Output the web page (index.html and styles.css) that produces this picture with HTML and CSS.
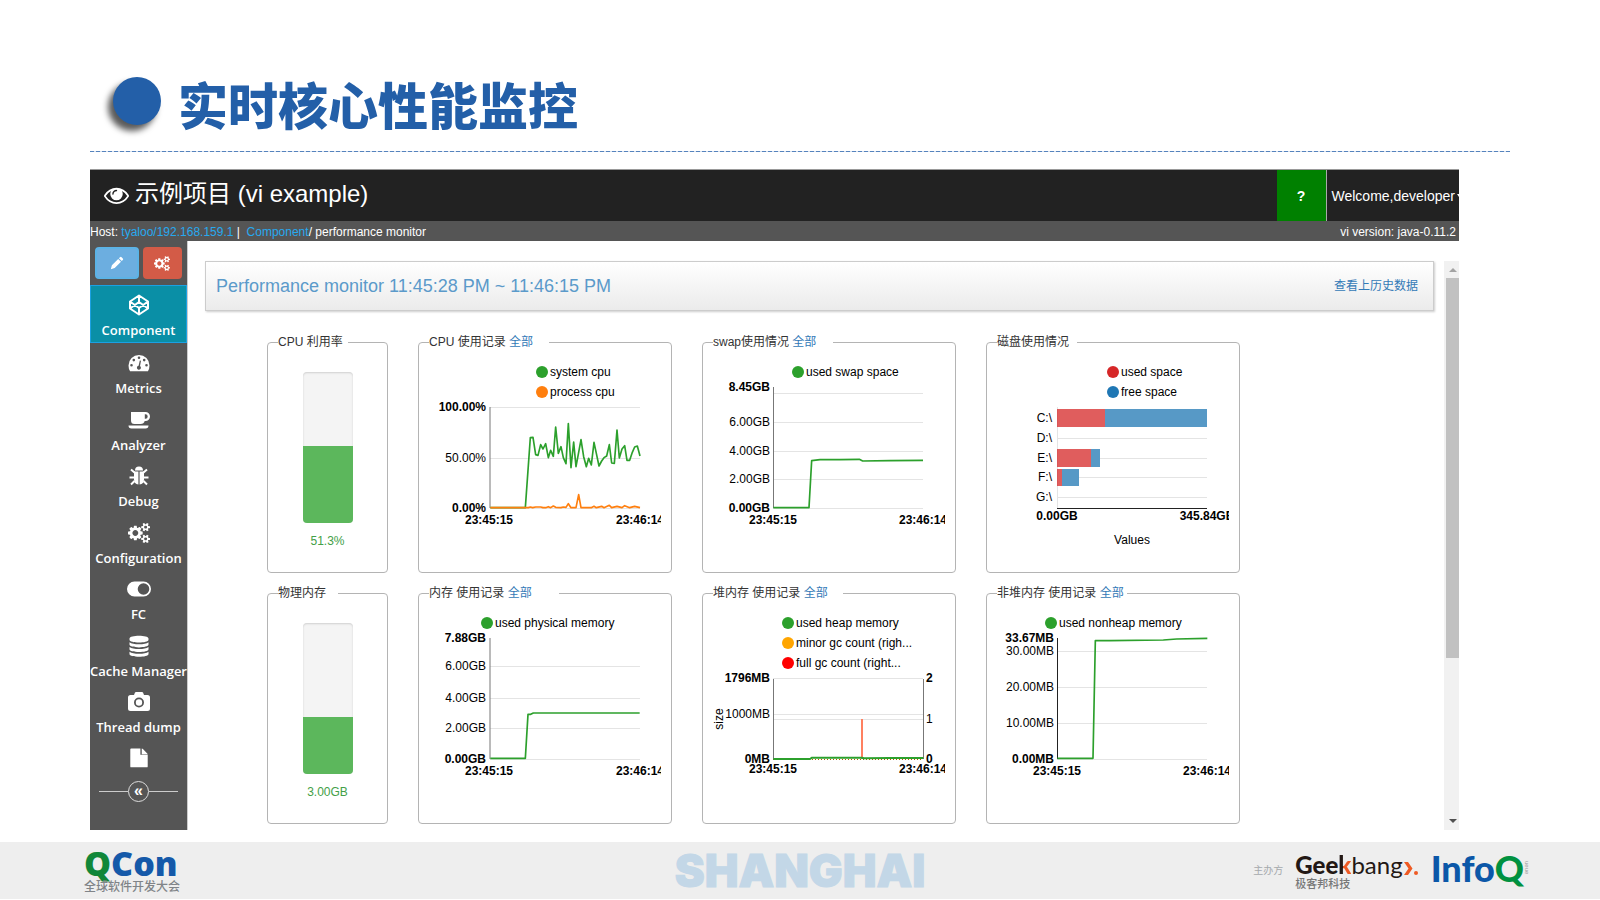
FILE: index.html
```html
<!DOCTYPE html>
<html lang="zh-CN">
<head>
<meta charset="utf-8">
<title>实时核心性能监控</title>
<link rel="stylesheet" href="styles.css">
</head>
<body>
<svg class="defs" width="0" height="0" aria-hidden="true">
  <symbol id="cogs" viewBox="0 0 1920 1792"><path d="M896 896q0-106-75-181t-181-75-181 75-75 181 75 181 181 75 181-75 75-181zm768 512q0-52-38-90t-90-38-90 38-38 90q0 53 37.500 90.500t90.500 37.500 90.500-37.500 37.500-90.500zm0-1024q0-52-38-90t-90-38-90 38-38 90q0 53 37.500 90.500t90.500 37.500 90.500-37.500 37.500-90.500zm-384 421v185q0 10-7 19.500t-16 10.500l-155 24q-11 35-32 76 34 48 90 115 7 11 7 20 0 12-7 19-23 30-82.500 89.500t-78.500 59.500q-11 0-21-7l-115-90q-37 19-77 31-11 108-23 155-7 24-30 24h-186q-11 0-20-7.500t-10-17.500l-23-153q-34-10-75-31l-118 89q-7 7-20 7-11 0-21-8-144-133-144-160 0-9 7-19 10-14 41-53t47-61q-23-44-35-82l-152-24q-10-1-17-9.500t-7-19.500v-185q0-10 7-19.500t16-10.500l155-24q11-35 32-76-34-48-90-115-7-11-7-20 0-12 7-20 22-30 82-89t79-59q11 0 21 7l115 90q34-18 77-32 11-108 23-154 7-24 30-24h186q11 0 20 7.500t10 17.500l23 153q34 10 75 31l118-89q8-7 20-7 11 0 21 8 144 133 144 160 0 8-7 19-12 16-42 54t-45 60q23 48 34 82l152 23q10 2 17 10.500t7 19.500zm640 533v140q0 16-149 31-12 27-30 52 51 113 51 138 0 4-4 7-122 71-124 71-8 0-46-47t-52-68q-20 2-30 2t-30-2q-14 21-52 68t-46 47q-2 0-124-71-4-3-4-7 0-25 51-138-18-25-30-52-149-15-149-31v-140q0-16 149-31 13-29 30-52-51-113-51-138 0-4 4-7 4-2 35-20t59-34 30-16q8 0 46 46.500t52 67.500q20-2 30-2t30 2q51-71 92-112l6-2q4 0 124 70 4 3 4 7 0 25-51 138 17 23 30 52 149 15 149 31zm0-1024v140q0 16-149 31-12 27-30 52 51 113 51 138 0 4-4 7-122 71-124 71-8 0-46-47t-52-68q-20 2-30 2t-30-2q-14 21-52 68t-46 47q-2 0-124-71-4-3-4-7 0-25 51-138-18-25-30-52-149-15-149-31v-140q0-16 149-31 13-29 30-52-51-113-51-138 0-4 4-7 4-2 35-20t59-34 30-16q8 0 46 46.500t52 67.500q20-2 30-2t30 2q51-71 92-112l6-2q4 0 124 70 4 3 4 7 0 25-51 138 17 23 30 52 149 15 149 31z"/></symbol>
</svg>

<header class="slide-head">
  <span class="bullet"></span>
  <h1>实时核心性能监控</h1>
</header>

<div class="app">
  <header class="navbar">
    <svg class="eye" viewBox="0 256 1792 1280"><path d="M1664 960q-152-236-381-353 61 104 61 225 0 185-131.500 316.500t-316.500 131.500-316.500-131.500-131.500-316.500q0-121 61-225-229 117-381 353 133 205 333.500 326.500t434.500 121.500 434.500-121.500 333.500-326.500zm-720-384q0-20-14-34t-34-14q-125 0-214.500 89.500t-89.500 214.500q0 20 14 34t34 14 34-14 14-34q0-86 61-147t147-61q20 0 34-14t14-34zm848 384q0 34-20 69-140 230-376.500 368.500t-499.500 138.500-499.500-139-376.500-368q-20-35-20-69t20-69q140-229 376.500-368t499.500-139 499.500 139 376.500 368q20 35 20 69z"/></svg>
    <span class="brand">示例项目 (vi example)</span>
    <button class="help" type="button">?</button>
    <span class="welcome">Welcome,developer</span>
    <svg class="caret" viewBox="0 0 3 6"><path d="M1 1h2v3z"/></svg>
  </header>
  <div class="crumbs">
    <span>Host: <a href="#host">tyaloo/192.168.159.1</a> |&nbsp; <a href="#component">Component</a>/ performance monitor</span>
    <span>vi version: java-0.11.2</span>
  </div>
  <div class="body">
    <aside class="side">
      <div class="tools">
        <button class="tool edit" type="button" aria-label="Edit"><svg viewBox="0 0 14 14"><path d="M10 1.200q.8-.8 1.600 0l1.200 1.200q.8.8 0 1.600L11.700 5.100 8.900 2.300zM8.200 3l2.800 2.800-6.300 6.300L.8 13.200l1.100-3.900z"/></svg></button>
        <button class="tool conf" type="button" aria-label="Settings"><svg><use href="#cogs"/></svg></button>
      </div>
      <nav class="menu">
        <a class="item active" href="#component"><svg viewBox="0 0 24 24"><path class="line" d="M12 2.500l9 6v7l-9 6-9-6v-7zM12 2.500V9M12 15v6.500M3 8.500l9 6.500 9-6.500M3 15.500L12 9l9 6.500"/></svg>Component</a>
        <div class="rest">
        <a class="item" href="#metrics"><svg viewBox="0 0 24 24"><path fill-rule="evenodd" d="M1.500 14.500a10.500 10.500 0 0 1 21 0q0 3.200-1.600 5.800H3.100q-1.600-2.600-1.600-5.800zM4.500 13a1.300 1.300 0 1 0 0 2.600 1.300 1.300 0 0 0 0-2.600zM6.800 7.800a1.300 1.300 0 1 0 0 2.600 1.300 1.300 0 0 0 0-2.600zM12 5.500a1.300 1.300 0 1 0 0 2.600 1.300 1.300 0 0 0 0-2.600zM17.200 7.800a1.300 1.300 0 1 0 0 2.600 1.300 1.300 0 0 0 0-2.600zM19.500 13a1.300 1.300 0 1 0 0 2.600 1.300 1.300 0 0 0 0-2.600zM12.800 9.500l-1.200 5.200a2 2 0 1 0 1.400.3l1-5.200z"/></svg>Metrics</a>
        <a class="item" href="#analyzer"><svg viewBox="0 0 24 24"><path fill-rule="evenodd" d="M4 4h14.500a4.500 4.500 0 0 1 0 9h-.8q-.7 3-4.200 3H7.500Q4 16 4 12.500zM17.800 6.300v4.400h.7a2.200 2.200 0 0 0 0-4.400zM1.500 17.500h20q0 3-3 3h-14q-3 0-3-3z"/></svg>Analyzer</a>
        <a class="item" href="#debug"><svg viewBox="0 0 24 24"><path d="M8 6.500a4 4 0 0 1 8 0zM7 7.500h4.400v13Q7 20 7 15.500zM17 7.500h-4.400v13Q17 20 17 15.500z"/><path class="line" d="M7.500 8.500L4 5.500M16.500 8.500L20 5.500M7.500 13.500h-5M16.500 13.500h5M7.500 17L4 20.500M16.500 17L20 20.500"/></svg>Debug</a>
        <a class="item" href="#configuration"><svg class="cogs"><use href="#cogs"/></svg>Configuration</a>
        <a class="item" href="#fc"><svg viewBox="0 0 24 24"><path fill-rule="evenodd" d="M7.500 4.500h9a7.500 7.500 0 0 1 0 15h-9a7.500 7.500 0 0 1 0-15zM16.500 6.200a5.800 5.800 0 1 0 0 11.600 5.800 5.800 0 0 0 0-11.600z"/></svg>FC</a>
        <a class="item" href="#cache"><svg viewBox="0 0 24 24"><path d="M2.500 4.500C2.500.8 21.500.8 21.500 4.500v1.300c0 3.700-19 3.700-19 0zM2.500 8.300q3 2 9.500 2t9.500-2v2.300c0 3.700-19 3.700-19 0zM2.500 13q3 2 9.500 2t9.500-2v2.300c0 3.700-19 3.700-19 0zM2.500 17.700q3 2 9.500 2t9.500-2v2.300c0 3.700-19 3.700-19 0z"/></svg>Cache Manager</a>
        <a class="item" href="#thread"><svg viewBox="0 0 24 24"><path fill-rule="evenodd" d="M3.500 5H7l1-2.500Q8.300 2 9 2h6q.7 0 1 .5L17 5h3.500q2.500 0 2.500 2.500v11q0 2.500-2.500 2.500h-17Q1 21 1 18.500v-11Q1 5 3.500 5zM12 7.500a5 5 0 1 0 0 10 5 5 0 0 0 0-10zM12 9.300a3.200 3.200 0 1 1 0 6.400 3.200 3.200 0 0 1 0-6.400z"/></svg>Thread dump</a>
        </div>
      </nav>
      <div class="side-foot">
        <a href="#docs" aria-label="Documents"><svg viewBox="0 0 24 24"><path d="M3.500 1.500h10v7h8v12.700q0 1-1 1h-17q-1 0-1-1V2.500q0-1 1-1zM15 1.500q.6.100 1 .5l5 5q.4.400.5 1H15z"/></svg></a>
        <button class="fold" type="button" aria-label="Collapse"><span>«</span></button>
      </div>
    </aside>

    <main class="main">
      <div class="content">
        <div class="panel"><h2>Performance monitor 11:45:28 PM ~ 11:46:15 PM</h2><a href="#history">查看上历史数据</a></div>
        <div class="cards">
          <fieldset class="card"><legend class="w70">CPU 利用率</legend>
            <div class="gauge"><div class="tube"><div class="fill" style="height:51.3%"></div></div><span>51.3%</span></div>
          </fieldset>

          <fieldset class="card"><legend class="w120">CPU 使用记录 <a href="#cpu">全部</a></legend>
            <svg class="chart" viewBox="0 0 232 221">
              <circle class="green" cx="113" cy="21" r="6"/><text x="121" y="25">system cpu</text>
              <circle class="orange" cx="113" cy="41" r="6"/><text x="121" y="45">process cpu</text>
              <path class="grid" d="M61 56.500h150M61 107.500h150M61 157.500h150"/>
              <path class="axis" d="M61 56v101"/>
              <text class="end bold" x="57" y="60">100.00%</text><text class="end" x="57" y="111">50.00%</text><text class="end bold" x="57" y="161">0.00%</text>
              <text class="mid bold" x="60" y="173">23:45:15</text><text class="mid bold" x="211" y="173">23:46:14</text>
              <g transform="translate(-29 -31) scale(.33333)">
                <polyline class="series" points="271,563 376,563 391,353 399,352 407,404 414,406 422,374 429,387 437,371 445,413 452,391 460,409 467,321 475,400 483,380 490,413 498,431 505,311 513,443 521,366 528,440 536,397 543,359 551,410 559,440 566,415 574,435 582,367 589,400 597,438 605,423 612,413 620,408 628,374 635,429 643,430 651,330 658,414 666,387 674,377 681,421 689,421 697,397 704,381 712,378 720,408"/>
                <polyline class="series proc" points="271,563 385,563 391,561 398,563 407,561 422,561 429,563 437,563 445,560 452,563 460,558 467,562 483,563 490,561 498,562 505,551 513,563 528,563 536,524 543,563 574,563 582,559 589,563 605,559 612,563 628,556 635,563 651,559 666,563 674,557 689,563 704,559 720,563"/>
              </g>
            </svg>
          </fieldset>

          <fieldset class="card"><legend class="w120">swap使用情况 <a href="#swap">全部</a></legend>
            <svg class="chart" viewBox="0 0 232 221">
              <circle class="green" cx="85" cy="21" r="6"/><text x="93" y="25">used swap space</text>
              <path class="grid" d="M60 42.500h150M60 71.500h150M60 100.500h150M60 128.500h150M60 157.500h150"/>
              <path class="axis" d="M60.500 36v121"/>
              <text class="end bold" x="57" y="40">8.45GB</text><text class="end" x="57" y="75">6.00GB</text><text class="end" x="57" y="104">4.00GB</text><text class="end" x="57" y="132">2.00GB</text><text class="end bold" x="57" y="161">0.00GB</text>
              <text class="mid bold" x="60" y="173">23:45:15</text><text class="mid bold" x="210" y="173">23:46:14</text>
              <g transform="translate(-23 -31) scale(.33333)"><polyline class="series" points="250,563 357,563 365,422 390,419 450,419 508,418 518,423 600,422 699,421"/></g>
            </svg>
          </fieldset>

          <fieldset class="card"><legend class="w80">磁盘使用情况</legend>
            <svg class="chart" viewBox="0 0 232 221">
              <circle class="red" cx="116" cy="21" r="6"/><text x="124" y="25">used space</text>
              <circle class="blue" cx="116" cy="41" r="6"/><text x="124" y="45">free space</text>
              <path class="grid" d="M60.500 56v101M60 87.500h150M103 107.500h107M82 126.500h128M60 146.500h150"/>
              <g class="bars"><path class="red" d="M60 58h48v18h-48zM60 98h34v18h-34zM60 118h5v17h-5z"/><path class="blue" d="M108 58h102v18h-102zM94 98h9v18h-9zM65 118h17v17h-17z"/></g>
              <path class="axis dark" d="M60 157.500h150"/>
              <text class="end" x="55" y="71">C:\</text><text class="end" x="55" y="91">D:\</text><text class="end" x="55" y="111">E:\</text><text class="end" x="55" y="130">F:\</text><text class="end" x="55" y="150">G:\</text>
              <text class="mid bold" x="60" y="169">0.00GB</text><text class="mid bold" x="210" y="169">345.84GB</text><text class="mid" x="135" y="193">Values</text>
            </svg>
          </fieldset>

          <fieldset class="card"><legend class="w60">物理内存</legend>
            <div class="gauge"><div class="tube"><div class="fill" style="height:38%"></div></div><span>3.00GB</span></div>
          </fieldset>

          <fieldset class="card"><legend class="w130">内存 使用记录 <a href="#memory">全部</a></legend>
            <svg class="chart" viewBox="0 0 232 221">
              <circle class="green" cx="58" cy="21" r="6"/><text x="66" y="25">used physical memory</text>
              <path class="grid" d="M61 64.500h150M61 96.500h150M61 126.500h150M61 157.500h150"/>
              <path class="axis" d="M61 36v121"/>
              <text class="end bold" x="57" y="40">7.88GB</text><text class="end" x="57" y="68">6.00GB</text><text class="end" x="57" y="100">4.00GB</text><text class="end" x="57" y="130">2.00GB</text><text class="end bold" x="57" y="161">0.00GB</text>
              <text class="mid bold" x="60" y="173">23:45:15</text><text class="mid bold" x="211" y="173">23:46:14</text>
              <g transform="translate(-29 -27) scale(.33333)"><polyline class="series" points="271,550 376,550 384,418 392,418 400,414 719,414"/></g>
            </svg>
          </fieldset>

          <fieldset class="card"><legend class="w130">堆内存 使用记录 <a href="#heap">全部</a></legend>
            <svg class="chart" viewBox="0 0 232 221">
              <circle class="green" cx="75" cy="21" r="6"/><text x="83" y="25">used heap memory</text>
              <circle class="amber" cx="75" cy="41" r="6"/><text x="83" y="45">minor gc count (righ...</text>
              <circle class="pure" cx="75" cy="61" r="6"/><text x="83" y="65">full gc count (right...</text>
              <path class="grid" d="M60 76.500h150M60 112.500h150M60 117.500h150"/>
              <path class="axis" d="M60.500 77v80M210.500 77v80"/>
              <path class="gc" d="M149 117v40"/>
              <text class="end bold" x="57" y="80">1796MB</text><text class="end" x="57" y="116">1000MB</text><text class="end bold" x="57" y="161">0MB</text>
              <text class="bold" x="213" y="80">2</text><text x="213" y="121">1</text><text class="bold" x="213" y="161">0</text>
              <text class="mid" transform="translate(10 117) rotate(-90)">size</text>
              <text class="mid bold" x="60" y="171">23:45:15</text><text class="mid bold" x="210" y="171">23:46:14</text>
              <path class="minor" d="M60 157.500h150"/>
              <g transform="translate(-23 -27) scale(.33333)"><polyline class="series thick" points="250,552 360,552 366,548 515,548 522,550 600,549 700,549"/></g>
            </svg>
          </fieldset>

          <fieldset class="card"><legend class="w130">非堆内存 使用记录 <a href="#nonheap">全部</a></legend>
            <svg class="chart" viewBox="0 0 232 221">
              <circle class="green" cx="54" cy="21" r="6"/><text x="62" y="25">used nonheap memory</text>
              <path class="grid" d="M60 49.500h150M60 85.500h150M60 121.500h150M60 157.500h150"/>
              <path class="axis dark" d="M60.500 36v121"/>
              <text class="end bold" x="57" y="40">33.67MB</text><text class="end" x="57" y="53">30.00MB</text><text class="end" x="57" y="89">20.00MB</text><text class="end" x="57" y="125">10.00MB</text><text class="end bold" x="57" y="161">0.00MB</text>
              <text class="mid bold" x="60" y="173">23:45:15</text><text class="mid bold" x="210" y="173">23:46:14</text>
              <g transform="translate(-27 -27) scale(.33333)"><polyline class="series" points="262,550 369,550 376,197 420,197 580,195 620,192 712,190"/></g>
            </svg>
          </fieldset>
        </div>
      </div>
      <div class="scroll">
        <svg viewBox="0 0 15 17"><path fill="#a3a3a3" d="M5 11l4-4 4 4z"/></svg>
        <div class="track"><div class="thumb" style="height:71%"></div></div>
        <svg viewBox="0 0 15 17"><path fill="#505050" d="M5 6l4 4 4-4z"/></svg>
      </div>
    </main>
  </div>
</div>

<footer class="slide-foot">
  <div class="qcon"><div class="qcon-mark"><span>Q</span>Con</div><div class="qcon-sub">全球软件开发大会</div></div>
  <div class="city">SHANGHAI</div>
  <div class="hosts">
    <span class="by">主办方</span>
    <div class="geek"><div class="geek-mark"><b>Gee<span>k</span></b>bang<svg viewBox="0 0 16 16"><path d="M1 1h4l4.500 6.500L5 14H1l4.500-6.500z"/><circle cx="13" cy="12" r="2"/></svg></div><div class="geek-sub">极客邦科技</div></div>
    <div class="infoq">Info<span>Q</span><small>ueue</small></div>
  </div>
</footer>
</body>
</html>
```
FILE: styles.css
```css
* { box-sizing: border-box; }
body {
  margin: 0;
  min-height: 100vh;
  display: flex;
  flex-direction: column;
  background: #fff;
  color: #333;
  font: 12px/18px "Liberation Sans", "Noto Sans CJK SC", sans-serif;
}
a { color: #337ab7; text-decoration: none; }
button { border: 0; padding: 0; color: inherit; font: inherit; cursor: pointer; }
svg { fill: currentColor; }
.defs { position: absolute; }

.slide-head {
  display: flex;
  align-items: center;
  gap: 17px;
  height: 152px;
  margin: 0 90px 17px;
  padding: 50px 0 0 23px;
  background: repeating-linear-gradient(90deg, #5583bd 0 4px, #d5e0ef 4px 6px) bottom / 100% 1px no-repeat;
}
.bullet {
  width: 48px;
  height: 48px;
  border-radius: 50%;
  background: #235fa8;
  box-shadow: -5px 6px 6px rgba(0, 0, 0, .65);
}
h1 { margin: 4px 0 0; color: #235fa8; font: 900 50px/60px "Noto Sans CJK SC", sans-serif; }

.app { flex: 1; display: flex; flex-direction: column; margin: 0 141px 0 90px; }
.navbar {
  display: flex;
  align-items: center;
  height: 52px;
  border-top: 1px solid #999;
  background: #222;
  color: #fff;
}
.eye { width: 25px; height: 18px; margin: 0 6px 2px 14px; }
.brand { font-size: 24px; line-height: 48px; padding-bottom: 4px; }
.help {
  align-self: stretch;
  width: 50px;
  margin-left: auto;
  border-right: 1px solid #aaa;
  background: #008000;
  font-weight: bold;
  font-size: 14px;
}
.welcome { padding: 0 1px 0 5px; font-size: 14px; }
.caret { width: 3px; height: 6px; }
.crumbs { display: flex; justify-content: space-between; padding: 2px 3px 0 0; background: #555; color: #fff; }
.crumbs a { color: #27a9f0; }

.body { flex: 1; display: flex; }
.side {
  display: flex;
  flex-direction: column;
  width: 98px;
  border-right: 1px solid #ccc;
  background: #555;
  color: #fff;
}
.tools { display: flex; gap: 4px; padding: 6px 5px; }
.tool { flex: 1; display: grid; place-items: center; height: 32px; border-radius: 4px; }
.tool svg { width: 16px; height: 15px; }
.tool.edit { background: #6caee0; border: 2px solid #5cb3e6; }
.tool.edit svg { width: 14px; height: 14px; }
.tool.conf { background: #d35b47; }
.menu, .rest { flex: 1; display: flex; flex-direction: column; }
.item {
  flex: 1;
  display: flex;
  flex-direction: column;
  align-items: center;
  gap: 5px;
  padding-top: 8px;
  color: #fff;
  font: 600 13px/16px "Open Sans", sans-serif;
  white-space: nowrap;
}
.item svg { width: 24px; height: 24px; flex: none; }
.item .cogs { padding: 1px; }
.item.active { flex: none; height: 58px; padding-top: 7px; background: #0a8fa6; border: 1px solid #1ba1e2; }
.line { fill: none; stroke: currentColor; stroke-width: 2; stroke-linejoin: round; }
.side-foot { display: flex; flex-direction: column; align-items: center; gap: 12px; height: 91px; padding-top: 8px; }
.side-foot a { height: 22px; color: #fff; }
.side-foot svg { width: 22px; height: 22px; }
.fold {
  align-self: stretch;
  display: flex;
  align-items: center;
  margin: 0 9px;
  background: none;
}
.fold::before, .fold::after { content: ""; flex: 1; height: 1px; background: #ccc; }
.fold span {
  width: 21px;
  height: 21px;
  border: 1px solid #ddd;
  border-radius: 50%;
  font: bold 16px/17px "Liberation Sans", sans-serif;
}

.main { flex: 1; display: flex; gap: 10px; padding-top: 20px; min-width: 0; }
.content { flex: 1; padding: 0 0 6px 17px; }
.panel {
  display: flex;
  align-items: center;
  justify-content: space-between;
  height: 50px;
  margin-bottom: 21px;
  padding: 0 15px 0 10px;
  border: 1px solid #ccc;
  background: linear-gradient(#fff, #ebebeb);
  box-shadow: 1px 1px 2px rgba(0, 0, 0, .2);
}
h2 { margin: 0; color: #5b9aca; font: 18px/20px "Liberation Sans", sans-serif; }
.cards {
  display: grid;
  grid-template-columns: 121px repeat(3, 254px);
  gap: 10px 30px;
  padding-left: 62px;
}
.card { min-width: 0; margin: 0; padding: 0 10px; border: 1px solid #b4b4b4; border-radius: 4px; }
legend { padding: 0; line-height: 20px; white-space: nowrap; }
.w60 { width: 60px; }
.w70 { width: 70px; }
.w80 { width: 80px; }
.w120 { width: 120px; }
.w130 { width: 130px; }
.gauge { display: flex; flex-direction: column; align-items: center; gap: 9px; height: 220px; padding-top: 20px; color: #43a047; }
.tube {
  display: flex;
  align-items: flex-end;
  width: 50px;
  height: 151px;
  border-radius: 4px;
  overflow: hidden;
  background: #f4f4f4;
  box-shadow: inset 0 1px 2px rgba(0, 0, 0, .15);
}
.fill { width: 100%; background: #5cb75c; }

.chart { display: block; width: 100%; height: 221px; margin-top: -1px; overflow: hidden; font-size: 12px; }
.chart text { fill: #000; }
.chart .bold { font-weight: bold; }
.end { text-anchor: end; }
.mid { text-anchor: middle; }
.grid { fill: none; stroke: #e4e4e4; }
.axis { fill: none; stroke: #777; stroke-width: 1; }
.dark { stroke: #222; }
.green { fill: #2ca02c; }
.orange { fill: #ff7f0e; }
.amber { fill: #ffa500; }
.pure { fill: #f00; }
.red { fill: #d62728; }
.blue { fill: #1f77b4; }
.bars { opacity: .75; }
.series { fill: none; stroke: #2ca02c; stroke-width: 5; stroke-linejoin: round; }
.series.proc { stroke: #ff7f0e; }
.series.thick { stroke-width: 6; }
.gc { stroke: #ff8060; stroke-width: 2; }
.minor { stroke: #b06000; stroke-dasharray: 1 2; }

.scroll { display: flex; flex-direction: column; width: 15px; background: #f1f1f1; }
.scroll svg { height: 17px; flex: none; }
.track { flex: 1; padding-left: 2px; }
.thumb { background: #c1c1c1; }

.slide-foot {
  display: grid;
  grid-template-columns: 1fr auto 1fr;
  align-items: center;
  height: 57px;
  margin: 12px 0 1px;
  padding: 0 70px;
  background: #eee;
}
.qcon { padding-left: 14px; }
.qcon-mark { color: #1559a9; font: 800 34px/30px "Open Sans", sans-serif; }
.qcon-mark span { color: #118739; }
.qcon-sub { color: #808488; font: 500 12px/16px "Noto Sans CJK SC", sans-serif; }
.city { color: #c3d7e7; font: 900 45px/50px Inter, sans-serif; -webkit-text-stroke: 1px #c3d7e7; }
.hosts { display: flex; align-items: center; justify-content: flex-end; }
.by { margin-right: 12px; color: #a5a9ac; font-size: 10px; }
.geek { margin-right: 12px; color: #231815; }
.geek-mark { display: flex; align-items: center; height: 24px; font: 24px/24px Lato, sans-serif; }
.geek-mark b { font-weight: 900; }
.geek-mark span {
  background: linear-gradient(90deg, #231815 5px, #ee5a24 5px);
  background-clip: text;
  color: transparent;
}
.geek-mark svg { width: 16px; height: 16px; margin-top: 8px; color: #ee5a24; }
.geek-sub { color: #777; font: 500 11px/12px "Noto Sans CJK SC", sans-serif; }
.infoq { display: flex; align-items: center; padding-bottom: 6px; color: #0b57a8; font: 900 36px/40px Lato, sans-serif; }
.infoq span { color: #009140; }
.infoq small { color: #999; font: 6px/6px "Liberation Sans", sans-serif; writing-mode: vertical-rl; }
```
